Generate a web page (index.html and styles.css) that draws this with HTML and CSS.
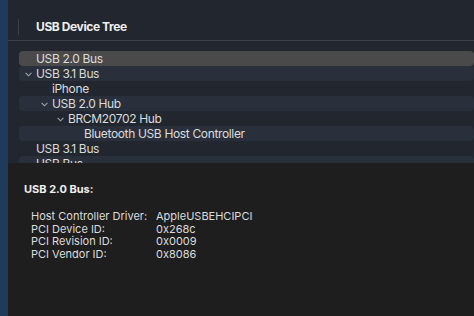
FILE: index.html
```html
<!DOCTYPE html>
<html lang="en">
<head>
  <meta charset="UTF-8">
  <meta name="viewport" content="width=device-width, initial-scale=1.0">
  <title>System Information - USB</title>
  <link rel="stylesheet" href="styles.css">
</head>
<body>
  <div class="window-edge"></div>

  <main class="content">
    <section class="tree-pane">
      <div class="tree-header">
        <span class="header-sep"></span>
        <h1>USB Device Tree</h1>
      </div>

      <ul class="tree">
        <li class="row selected level-0"><span class="label">USB 2.0 Bus</span></li>
        <li class="row alt level-0">
          <svg class="chevron" viewBox="0 0 8 5"><path d="M0.7 0.7 L4 4 L7.3 0.7" /></svg>
          <span class="label">USB 3.1 Bus</span>
        </li>
        <li class="row level-1"><span class="label">iPhone</span></li>
        <li class="row alt level-1">
          <svg class="chevron" viewBox="0 0 8 5"><path d="M0.7 0.7 L4 4 L7.3 0.7" /></svg>
          <span class="label">USB 2.0 Hub</span>
        </li>
        <li class="row level-2">
          <svg class="chevron" viewBox="0 0 8 5"><path d="M0.7 0.7 L4 4 L7.3 0.7" /></svg>
          <span class="label">BRCM20702 Hub</span>
        </li>
        <li class="row alt level-3"><span class="label">Bluetooth USB Host Controller</span></li>
        <li class="row level-0"><span class="label">USB 3.1 Bus</span></li>
        <li class="row alt level-0"><span class="label">USB Bus</span></li>
      </ul>
    </section>

    <section class="detail-pane">
      <h2>USB 2.0 Bus:</h2>
      <dl class="props">
        <dt>Host Controller Driver:</dt><dd>AppleUSBEHCIPCI</dd>
        <dt>PCI Device ID:</dt><dd>0x268c</dd>
        <dt>PCI Revision ID:</dt><dd>0x0009</dd>
        <dt>PCI Vendor ID:</dt><dd>0x8086</dd>
      </dl>
    </section>
  </main>
</body>
</html>
```

FILE: styles.css
```css
body {
  margin: 0;
  padding: 0;
  width: 474px;
  height: 316px;
  overflow: hidden;
  display: flex;
  background: #1e1e1e;
  font-family: Inter, "Liberation Sans", sans-serif;
  color: #dcdcdc;
}

.window-edge {
  width: 8px;
  flex-shrink: 0;
  background: #1e3a5c;
}

.content {
  flex: 1;
  display: flex;
  flex-direction: column;
}

.tree-pane {
  height: 163px;
  overflow: hidden;
  background: #21262f;
  flex-shrink: 0;
}

.tree-header {
  height: 27px;
  padding: 13px 0 0 10px;
  border-bottom: 1px solid #3a3f48;
  display: flex;
  align-items: center;
}

.header-sep {
  width: 1px;
  height: 16px;
  background: #3a3f48;
}

.tree-header h1 {
  margin: 0 0 0 17px;
  font-size: 12px;
  font-weight: 700;
  letter-spacing: -0.4px;
  color: #f0f0f0;
}

.tree {
  list-style: none;
  margin: 0;
  padding: 10px 0 0 11px;
}

.row {
  height: 15px;
  display: flex;
  align-items: center;
  border-radius: 4px;
  font-size: 12px;
  letter-spacing: -0.35px;
  position: relative;
}

.row.alt {
  background: #29303b;
}

.row.selected {
  background: #4a4a4a;
}

.row .label {
  line-height: 15px;
}

.level-0 .label { padding-left: 17px; }
.level-1 .label { padding-left: 33px; }
.level-2 .label { padding-left: 49px; }
.level-3 .label { padding-left: 65px; }

.chevron {
  position: absolute;
  top: 6px;
  width: 7px;
  height: 5px;
  fill: none;
  stroke: #a8a8a8;
  stroke-width: 1.2;
}

.level-0 .chevron { left: 6px; }
.level-1 .chevron { left: 22px; }
.level-2 .chevron { left: 38px; }

.detail-pane {
  flex: 1;
  padding: 19px 0 0 16px;
}

.detail-pane h2 {
  margin: 0 0 14px;
  font-size: 11px;
  font-weight: 700;
  color: #f0f0f0;
}

.props {
  margin: 0;
  padding-left: 7px;
  display: grid;
  grid-template-columns: 125px auto;
  font-size: 11px;
  line-height: 12.6px;
}

.props dt,
.props dd {
  margin: 0;
}
```
